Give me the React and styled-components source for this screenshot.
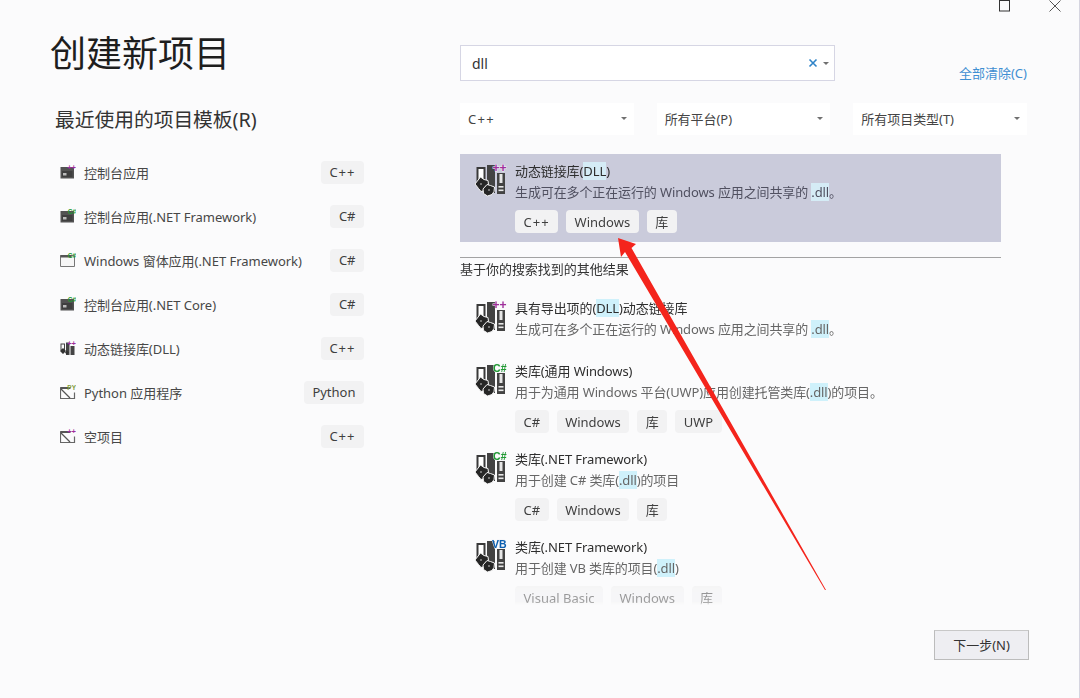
import React from "react";
import styled, { createGlobalStyle } from "styled-components";

const Global = createGlobalStyle`
  html, body { margin: 0; padding: 0; background: #fbfbfc; }
  #root { width: 1080px; height: 698px; overflow: hidden; }
  * { box-sizing: border-box; }
`;

const Page = styled.div`
  position: relative;
  width: 1080px;
  height: 698px;
  overflow: hidden;
  display: grid;
  grid-template-columns: 460px 1fr;
  grid-template-rows: 45px 1fr;
  background: #fbfbfc;
  border-right: 1px solid #d5d5e0;
  color: #3c3c3c;
  font-family: "Noto Sans", "Noto Sans CJK SC", sans-serif;
  font-size: 13px;
  filter: blur(0.3px);
`;
const LeftCol = styled.section`
  grid-column: 1;
  grid-row: 1 / 3;
  padding: 29px 96px 0 50px;
`;
const Title = styled.h1`
  margin: 0;
  font-size: 36px;
  font-weight: 400;
  line-height: 50px;
  color: #1e1e1e;
`;
const SubTitle = styled.h2`
  margin: 17px 0 0 5px;
  font-size: 19.8px;
  font-weight: 400;
  line-height: 48px;
  color: #333;
  letter-spacing: -0.05px;
`;
const RecentList = styled.div`
  margin: 6px 0 0 10px;
  display: flex;
  flex-direction: column;
`;
const RecentRow = styled.div`
  height: 44px;
  display: flex;
  align-items: center;
  color: #474747;
  font-size: 13px;
`;
const RecentName = styled.span`
  margin-left: 8px;
  flex: 1;
  white-space: nowrap;
  letter-spacing: -0.03px;
`;
const Tag = styled.span`
  display: inline-flex;
  align-items: center;
  height: 23px;
  padding: 0 8.5px;
  border-radius: 4px;
  background: #f2f2f3;
  color: #3f3f3f;
  font-size: 13px;
  white-space: nowrap;
  letter-spacing: ${(p) => (p.$spaced ? "1px" : "0")};
`;
const TitleBar = styled.div`
  grid-column: 2;
  grid-row: 1;
  display: flex;
  justify-content: flex-end;
  align-items: flex-start;
  gap: 39px;
  padding-right: 18px;
`;
const RightCol = styled.section`
  grid-column: 2;
  grid-row: 2;
  width: 569px;
  display: flex;
  flex-direction: column;
`;
const SearchRow = styled.div`
  display: flex;
  align-items: flex-end;
  justify-content: space-between;
  padding-right: 2px;
`;
const SearchBox = styled.div`
  width: 375px;
  height: 36px;
  background: #fff;
  border: 1px solid #d6d6e4;
  display: flex;
  align-items: center;
  padding: 0 5px 0 11px;
  font-size: 14px;
  color: #333;
`;
const SearchValue = styled.span`
  flex: 1;
`;
const ClearLink = styled.a`
  color: #3f8fd2;
  font-size: 13px;
  line-height: 18px;
  margin-bottom: -1px;
`;
const Filters = styled.div`
  margin-top: 22px;
  display: flex;
  gap: 23px;
  width: 567px;
`;
const Filter = styled.div`
  flex: 1;
  height: 32px;
  background: #fff;
  display: flex;
  align-items: center;
  justify-content: space-between;
  padding: 0 7px 1px 8px;
  font-size: 13px;
  color: #444;
  letter-spacing: ${(p) => (p.$spaced ? "1.3px" : "-0.05px")};
`;
const Caret = styled.i`
  width: 0;
  height: 0;
  border-left: 3px solid transparent;
  border-right: 3px solid transparent;
  border-top: 3px solid #707070;
`;
const ClearX = styled.svg`
  width: 10px;
  height: 10px;
  margin-right: 5px;
`;
const Results = styled.div`
  margin-top: 19px;
  width: 541px;
  height: 451px;
  overflow: hidden;
  -webkit-mask-image: linear-gradient(#000 0, #000 425px, rgba(0,0,0,.55) 437px, rgba(0,0,0,.5) 448px, transparent 451px);
  mask-image: linear-gradient(#000 0, #000 425px, rgba(0,0,0,.55) 437px, rgba(0,0,0,.5) 448px, transparent 451px);
`;
const Item = styled.article`
  height: ${(p) => (p.$short ? 63 : 88)}px;
  padding: 8px 0 0 15px;
  display: flex;
  gap: 8px;
  background: ${(p) => (p.$selected ? "#cacbdb" : "transparent")};
`;
const ItemBody = styled.div`
  display: flex;
  flex-direction: column;
  min-width: 0;
`;
const ItemTitle = styled.div`
  height: 19px;
  line-height: 19px;
  font-size: 13px;
  color: #2e2e2e;
  white-space: nowrap;
  letter-spacing: -0.1px;
`;
const ItemDesc = styled.div`
  height: 22px;
  line-height: 22px;
  font-size: 13px;
  color: ${(p) => (p.$selected ? "#505060" : "#666")};
  white-space: nowrap;
  letter-spacing: -0.12px;
`;
const TagRow = styled.div`
  margin-top: 7px;
  display: flex;
  gap: 8px;
`;
const Mark = styled.mark`
  background: ${(p) => (p.$selected ? "#d5ecf6" : "#cff1fb")};
  color: inherit;
`;
const Divider = styled.hr`
  margin: 15px 0 0;
  border: 0;
  border-top: 1px solid #a3a3a3;
`;
const GroupTitle = styled.div`
  height: 25px;
  line-height: 23px;
  font-size: 13px;
  color: #333;
  margin-bottom: 8px;
  letter-spacing: -0.03px;
`;
const Footer = styled.div`
  width: 569px;
  margin-top: 25px;
  display: flex;
  justify-content: flex-end;
`;
const NextButton = styled.button`
  width: 95px;
  height: 30px;
  background: #eeeef2;
  border: 1px solid #bcbcbc;
  border-top-color: #c8c8c8;
  font: inherit;
  font-size: 13px;
  color: #333;
  padding: 0 0 2px;
`;
const ArrowLayer = styled.svg`
  position: absolute;
  left: 0;
  top: 0;
  pointer-events: none;
`;

const BADGES = {
  cpp: { text: "++", color: "#a02f9b", size: 12, y: 10 },
  cs: { text: "C#", color: "#1f9a32", size: 10.5, y: 9.5 },
  vb: { text: "VB", color: "#0b5fb0", size: 10.5, y: 9.5 },
  py: { text: "PY", color: "#7f9b3a", size: 9.5, y: 9.5 },
};
const BADGE_FONT = "'Liberation Sans', sans-serif";

function LibraryIcon({ kind }) {
  const b = BADGES[kind];
  return (
    <svg width="32" height="36" viewBox="0 0 32 36" style={{ flex: "none" }}>
      <rect x="2.500" y="6" width="7" height="14" fill="#fff" stroke="#3a3a3a" strokeWidth="2" />
      <rect x="12" y="3" width="8" height="28" fill="#434343" />
      <rect x="22" y="11" width="8" height="21" fill="#434343" />
      <rect x="24.500" y="12" width="3" height="9" fill="#e6e6e6" />
      <rect x="23.500" y="24" width="5" height="1.600" fill="#e8e8e8" />
      <rect x="23.500" y="27.500" width="5" height="1.600" fill="#e8e8e8" />
      <path d="M0 22l5.500-7 3.500 2.500 4 1 .5 4-3 2 .5 3.500-5 1.500-2.500-3z" fill="#262626" stroke="#f4f4f4" strokeWidth="1" />
      <path d="M8 27l4-4.500 3.500 1 4 1.500-.5 4.500-2 3-4.500 1.500-4-2.500z" fill="#262626" stroke="#f4f4f4" strokeWidth="1" />
      <circle cx="6" cy="22" r=".8" fill="#ddd" />
      <circle cx="14" cy="28" r=".8" fill="#ddd" />
      <text x="31.500" y={b.y} textAnchor="end" fontSize={b.size} fontWeight="700" fontFamily={BADGE_FONT} fill={b.color} stroke="#f2f2f6" strokeWidth="0.8" paintOrder="stroke">{b.text}</text>
    </svg>
  );
}

function SmallIcon({ type, kind }) {
  const b = BADGES[kind];
  return (
    <svg width="16" height="16" viewBox="0 0 16 16" style={{ flex: "none" }}>
      {type === "console" && (
        <>
          <rect x="0.5" y="3" width="13.5" height="11.5" fill="#525252" />
          <rect x="2" y="7" width="10.5" height="6" fill="#3f3f3f" />
          <rect x="3" y="9" width="3.5" height="2.5" fill="#bbb" />
        </>
      )}
      {type === "window" && (
        <>
          <path d="M.5 3.500h14v11H.5z" fill="#f6f6f6" stroke="#777" />
          <rect x="0.5" y="3" width="11" height="2.500" fill="#555" />
        </>
      )}
      {type === "empty" && (
        <>
          <path d="M.5 3.500h10M.5 3.500v11h14v-6" fill="none" stroke="#666" strokeWidth="1.2" />
          <path d="M1 5l9 9" stroke="#555" strokeWidth="1.3" />
          <path d="M.5 3h10v2H.5z" fill="#555" />
        </>
      )}
      {type === "lib" && (
        <>
          <rect x="1" y="4" width="3.500" height="6" fill="none" stroke="#444" />
          <rect x="6" y="2.500" width="3.500" height="12.500" fill="#444" />
          <rect x="10.500" y="6" width="4" height="9" fill="#444" />
          <path d="M0 11l3-3 3 3-3 3zM5 12.500l2-2 2 2-2 2.500z" fill="#333" />
        </>
      )}
      <text x="16" y="5.500" textAnchor="end" fontSize={kind === "cpp" ? 7.5 : 6.5} fontWeight="800" fontFamily={BADGE_FONT} fill={b.color}>{b.text}</text>
    </svg>
  );
}

const recent = [
  { icon: "console", kind: "cpp", name: "控制台应用", tag: "C++" },
  { icon: "console", kind: "cs", name: "控制台应用(.NET Framework)", tag: "C#" },
  { icon: "window", kind: "cs", name: "Windows 窗体应用(.NET Framework)", tag: "C#" },
  { icon: "console", kind: "cs", name: "控制台应用(.NET Core)", tag: "C#" },
  { icon: "lib", kind: "cpp", name: "动态链接库(DLL)", tag: "C++" },
  { icon: "empty", kind: "py", name: "Python 应用程序", tag: "Python" },
  { icon: "empty", kind: "cpp", name: "空项目", tag: "C++" },
];

export default function App() {
  return (
    <Page>
      <Global />
      <LeftCol>
        <Title>创建新项目</Title>
        <SubTitle>最近使用的项目模板(R)</SubTitle>
        <RecentList>
          {recent.map((r) => (
            <RecentRow key={r.name}>
              <SmallIcon type={r.icon} kind={r.kind} />
              <RecentName>{r.name}</RecentName>
              <Tag $spaced={r.tag === "C++"}>{r.tag}</Tag>
            </RecentRow>
          ))}
        </RecentList>
      </LeftCol>

      <TitleBar>
        <svg width="11" height="12" viewBox="0 0 11 12"><rect x="0.5" y="0.5" width="10" height="10.5" fill="none" stroke="#333" /></svg>
        <svg width="12" height="12" viewBox="0 0 12 12"><path d="M.5 .5l11 11M11.5 .5l-11 11" stroke="#555" /></svg>
      </TitleBar>

      <RightCol>
        <SearchRow>
          <SearchBox>
            <SearchValue>dll</SearchValue>
            <ClearX viewBox="0 0 10 10"><path d="M1.5 1.5l7 7M8.5 1.5l-7 7" stroke="#2f84c8" strokeWidth="1.6" /></ClearX>
            <Caret />
          </SearchBox>
          <ClearLink>全部清除(C)</ClearLink>
        </SearchRow>

        <Filters>
          <Filter $spaced>C++<Caret /></Filter>
          <Filter>所有平台(P)<Caret /></Filter>
          <Filter>所有项目类型(T)<Caret /></Filter>
        </Filters>

        <Results>
          <Item $selected>
            <LibraryIcon kind="cpp" />
            <ItemBody>
              <ItemTitle>动态链接库(<Mark $selected>DLL</Mark>)</ItemTitle>
              <ItemDesc $selected>生成可在多个正在运行的 Windows 应用之间共享的 <Mark $selected>.dll</Mark>。</ItemDesc>
              <TagRow><Tag $spaced>C++</Tag><Tag>Windows</Tag><Tag>库</Tag></TagRow>
            </ItemBody>
          </Item>
          <Divider />
          <GroupTitle>基于你的搜索找到的其他结果</GroupTitle>
          <Item $short>
            <LibraryIcon kind="cpp" />
            <ItemBody>
              <ItemTitle>具有导出项的(<Mark>DLL</Mark>)动态链接库</ItemTitle>
              <ItemDesc>生成可在多个正在运行的 Windows 应用之间共享的 <Mark>.dll</Mark>。</ItemDesc>
            </ItemBody>
          </Item>
          <Item>
            <LibraryIcon kind="cs" />
            <ItemBody>
              <ItemTitle>类库(通用 Windows)</ItemTitle>
              <ItemDesc>用于为通用 Windows 平台(UWP)应用创建托管类库(<Mark>.dll</Mark>)的项目。</ItemDesc>
              <TagRow><Tag>C#</Tag><Tag>Windows</Tag><Tag>库</Tag><Tag>UWP</Tag></TagRow>
            </ItemBody>
          </Item>
          <Item>
            <LibraryIcon kind="cs" />
            <ItemBody>
              <ItemTitle>类库(.NET Framework)</ItemTitle>
              <ItemDesc>用于创建 C# 类库(<Mark>.dll</Mark>)的项目</ItemDesc>
              <TagRow><Tag>C#</Tag><Tag>Windows</Tag><Tag>库</Tag></TagRow>
            </ItemBody>
          </Item>
          <Item>
            <LibraryIcon kind="vb" />
            <ItemBody>
              <ItemTitle>类库(.NET Framework)</ItemTitle>
              <ItemDesc>用于创建 VB 类库的项目(<Mark>.dll</Mark>)</ItemDesc>
              <TagRow><Tag>Visual Basic</Tag><Tag>Windows</Tag><Tag>库</Tag></TagRow>
            </ItemBody>
          </Item>
        </Results>

        <Footer>
          <NextButton>下一步(N)</NextButton>
        </Footer>
      </RightCol>

      <ArrowLayer width="1080" height="698" viewBox="0 0 1080 698">
        <path d="M618 238 L636 244 L631.5 248 L826 590 L825 590 L625 252 L621 257 Z" fill="#f4241c" />
      </ArrowLayer>
    </Page>
  );
}
